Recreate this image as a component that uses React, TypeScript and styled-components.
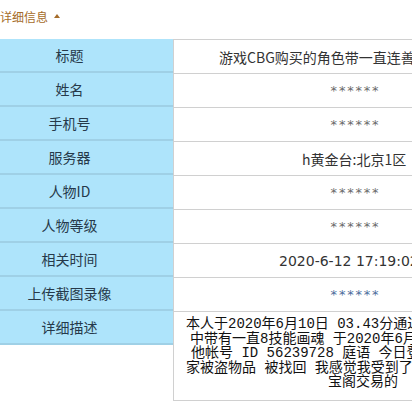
import React from "react";
import styled, { createGlobalStyle } from "styled-components";

const Global = createGlobalStyle`
  html, body { margin: 0; padding: 0; background: #fff; }
  body { font-family: "Noto Sans CJK SC", "Liberation Sans", sans-serif; overflow: hidden; }
`;

const Page = styled.div`
  width: 412px;
  height: 416px;
  overflow: hidden;
  position: relative;
`;

const Header = styled.div`
  height: 39px;
  box-sizing: border-box;
  padding-top: 9px;
  margin-left: -24px;
  display: flex;
  align-items: flex-start;
  gap: 6px;
  color: #a56c2a;
  font-size: 12px;
  line-height: 15px;
  white-space: nowrap;
`;

const Caret = styled.span`
  display: inline-block;
  width: 0;
  height: 0;
  margin-top: 5px;
  border-left: 3.5px solid transparent;
  border-right: 3.5px solid transparent;
  border-bottom: 4px solid #a56c2a;
`;

const Table = styled.div`
  display: grid;
  grid-template-columns: 207px 364px;
  margin-left: -34px;
  width: 571px;
  align-items: start;
`;

const Label = styled.div`
  height: 34px;
  box-sizing: border-box;
  background: #aee4fb;
  border-bottom: 2px solid #9fd0e6;
  display: flex;
  align-items: center;
  justify-content: center;
  color: #26394a;
  font-size: 14px;
  padding-bottom: 1px;
`;

const Value = styled.div<{ $tall?: boolean }>`
  height: ${(p) => (p.$tall ? "90px" : "34px")};
  box-sizing: border-box;
  border-top: 1px solid #d0d0d0;
  border-left: 1px solid #d0d0d0;
  ${(p) => (p.$tall ? "border-bottom: 1px solid #d0d0d0;" : "")}
  display: flex;
  align-items: center;
  justify-content: center;
  color: #333;
  font-size: 14px;
  white-space: nowrap;
  overflow: hidden;
`;

const LeftText = styled.span<{ $pad: number; $latin?: boolean }>`
  align-self: center;
  margin-right: auto;
  padding-left: ${(p) => p.$pad}px;
  ${(p) => (p.$latin ? `font-family: "DejaVu Sans", "Noto Sans CJK SC", sans-serif;` : "")}
`;

const Stars = styled.span<{ $link?: boolean }>`
  color: ${(p) => (p.$link ? "#4d6d9c" : "#6a6a6a")};
  font-family: "DejaVu Sans", sans-serif;
  letter-spacing: 1.8px;
  font-size: 13px;
`;

const Desc = styled.div`
  align-self: stretch;
  margin-right: auto;
  padding: 5px 0 0 12px;
  display: flex;
  flex-direction: column;
  font-family: "Liberation Mono", "Noto Sans CJK SC", monospace;
  font-size: 14px;
  line-height: 14.5px;
  color: #111;
`;

const DescLine = styled.div<{ $indent: number }>`
  padding-left: ${(p) => p.$indent}px;
  white-space: nowrap;
`;

const rows: { label: string; value: React.ReactNode }[] = [
  { label: "标题", value: <LeftText $pad={45}>游戏CBG购买的角色带一直连善</LeftText> },
  { label: "姓名", value: <Stars>******</Stars> },
  { label: "手机号", value: <Stars>******</Stars> },
  { label: "服务器", value: <LeftText $pad={128}>h黄金台:北京1区</LeftText> },
  { label: "人物ID", value: <Stars>******</Stars> },
  { label: "人物等级", value: <Stars>******</Stars> },
  { label: "相关时间", value: <LeftText $pad={105} $latin>2020-6-12 17:19:02</LeftText> },
  { label: "上传截图录像", value: <Stars $link>******</Stars> },
];

const lines = [
  { t: "本人于2020年6月10日 03.43分通过", i: 0 },
  { t: "中带有一直8技能画魂 于2020年6月", i: 4 },
  { t: "他帐号 ID 56239728 庭语 今日登", i: 5 },
  { t: "家被盗物品 被找回 我感觉我受到了欺", i: 0 },
  { t: "宝阁交易的", i: 142 },
];

export default function App() {
  return (
    <Page>
      <Global />
      <Header>
        <span>查看详细信息</span>
        <Caret />
      </Header>
      <Table>
        {rows.map((r) => (
          <React.Fragment key={r.label}>
            <Label>{r.label}</Label>
            <Value>{r.value}</Value>
          </React.Fragment>
        ))}
        <Label>详细描述</Label>
        <Value $tall>
          <Desc>
            {lines.map((l) => (
              <DescLine key={l.t} $indent={l.i}>
                {l.t}
              </DescLine>
            ))}
          </Desc>
        </Value>
      </Table>
    </Page>
  );
}
